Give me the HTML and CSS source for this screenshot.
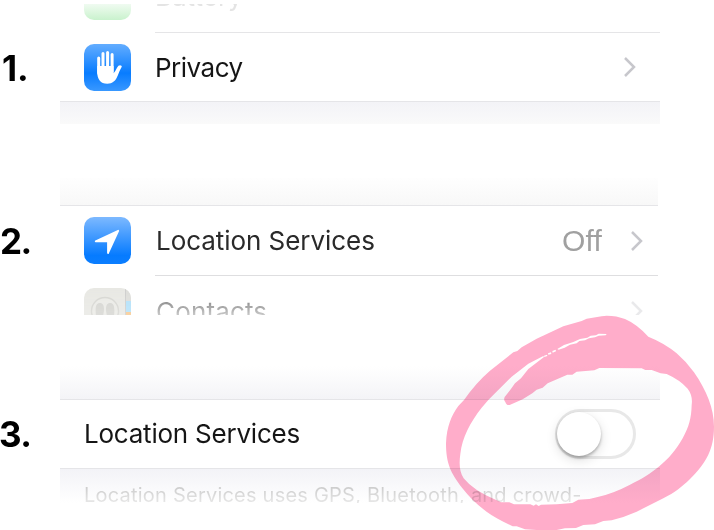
FILE: index.html
```html
<!DOCTYPE html>
<html lang="en">
<head>
<meta charset="utf-8">
<title>Location Services</title>
<link rel="stylesheet" href="styles.css">
</head>
<body>
<main>
  <section class="panel privacy">
    <div class="row battery">
      <span class="battery-icon"></span>
      <span class="label">Battery</span>
    </div>
    <div class="separator"></div>
    <div class="row">
      <b class="step one">1.</b>
      <svg class="app-icon" viewBox="0 0 47 47">
        <defs><linearGradient id="hand-bg" x2="0" y2="1"><stop stop-color="#63adff"/><stop offset=".62" stop-color="#087cff"/><stop offset="1" stop-color="#3998ff"/></linearGradient></defs>
        <rect width="47" height="47" rx="10" fill="url(#hand-bg)"/>
        <g fill="none" stroke="#fff" stroke-width="3" stroke-linecap="round"><path d="M14.7 14v15M19 9.5v16M23.6 8.6v17M28.1 10.5v17"/></g>
        <path fill="#fff" d="M13.2 22H29.6V29.2Q31.3 27.5 33 23.8Q34.5 21 36.6 21.4Q38.6 21.7 37.2 23.8Q35.4 27 34 31C31.7 37 28.5 39.7 23.3 39.7C16.4 39.7 13.2 35.2 13.2 28Z"/>
      </svg>
      <span class="label">Privacy</span>
      <svg class="chevron" viewBox="0 0 14 22"><path d="M2 2l9 9-9 9"/></svg>
    </div>
    <div class="band below"></div>
  </section>

  <section class="panel location">
    <div class="band above"></div>
    <div class="row">
      <b class="step two">2.</b>
      <svg class="app-icon" viewBox="0 0 47 47">
        <defs><linearGradient id="arrow-bg" x2="0" y2="1"><stop stop-color="#7db9ff"/><stop offset=".82" stop-color="#067bff"/><stop offset="1" stop-color="#0b7eff"/></linearGradient></defs>
        <rect width="47" height="47" rx="10" fill="url(#arrow-bg)"/>
        <path d="M34.2 13.8L24 36V24.3H11.7Z" fill="#fff" stroke="#fff" stroke-width="1.8" stroke-linejoin="round"/>
      </svg>
      <span class="label">Location Services</span>
      <span class="value">Off</span>
      <svg class="chevron" viewBox="0 0 14 22"><path d="M2 2l9 9-9 9"/></svg>
    </div>
    <div class="separator"></div>
    <div class="row contacts">
      <svg class="app-icon" viewBox="0 0 47 47">
        <defs><clipPath id="card"><rect width="47" height="47" rx="10"/></clipPath></defs>
        <g clip-path="url(#card)">
          <rect width="47" height="47" fill="#d5d5cd"/>
          <rect x="42" width="5" height="13" fill="#c2c2bb"/>
          <rect x="42" y="13" width="5" height="11" fill="#75c8f4"/>
          <rect x="42" y="24" width="5" height="23" fill="#ef9c35"/>
          <path d="M41.5 0V47" stroke="#999" stroke-width=".8"/>
          <circle cx="21" cy="23" r="13.5" fill="#d9d9d1" stroke="#b5b5ad" stroke-width="1.4"/>
          <path fill="#b3b3ab" d="M12 28C11 19 12 15 16 15S21 20 19 28ZM23 28C21 20 22 15 26 15S31 19 30 28Z"/>
        </g>
      </svg>
      <span class="label">Contacts</span>
      <svg class="chevron" viewBox="0 0 14 22"><path d="M2 2l9 9-9 9"/></svg>
    </div>
  </section>

  <section class="panel toggle">
    <div class="band above"></div>
    <div class="row">
      <b class="step three">3.</b>
      <span class="label">Location Services</span>
      <span class="switch"><i class="knob"></i></span>
    </div>
    <div class="band below"><p>Location Services uses GPS, Bluetooth, and crowd-</p></div>
  </section>

  <svg class="marker" viewBox="0 0 852 690">
    <path fill-rule="evenodd" d="M530 47Q560 47 585 57Q620 72 655 110Q705 130 740 160Q768 184 792 217C830 272 852 325 852 380C852 445 830 488 780 537C755 561 735 577 700 595L620 635L580 651L545 661L520 663L495 673L460 675L438 684L405 685L380 690H320L285 688L260 679H248L220 665C165 638 130 605 96 563C62 519 48 490 48 430C50 379 65 345 85 318L102 300Q137 249 180 212L250 157L262 153L275 142L320 116L400 79L455 63L470 56L515 49Z
      M101 535C88 515 87 490 91 462C97 411 120 368 155 323Q174 300 195 280L245 230L295 191L340 168L342 171L295 207L273 235L255 250L240 271L224 291Q220 300 226 306Q229 317 239 315L278 298L307 280L320 269L338 263L353 250L412 224H427L440 215L493 211L508 204L635 205L646 210H665L692 220L710 222Q750 240 773 266Q789 287 785 315C784 355 777 380 758 415C738 451 716 476 688 499C660 522 635 538 600 554Q551 580 500 592L478 597L445 599L427 609L380 613L333 614L326 618L318 613L311 617L301 613H252L238 607H213L200 601Q130 572 101 535Z
      M342 167l9-3 1 4-9 3ZM354 160l9-3 1 5-9 2ZM367 153l10-4 1 5-10 4ZM382 147L402 135L430 126L450 117L472 113L482 107L498 106L506 101L530 102L527 106L506 107L495 112L477 115L465 121L448 123L440 130L420 134L404 143L386 149Z"/>
  </svg>
</main>
</body>
</html>
```
FILE: styles.css
```css
* { box-sizing: border-box; }
body { margin: 0; background: #fff; font-family: Inter, "Liberation Sans", sans-serif; }
main { position: relative; width: 714px; height: 530px; overflow: hidden; }
.panel { width: 660px; }
.privacy { height: 124px; padding-top: 4px; }
.location { width: 658px; height: 137px; margin-top: 54px; }
.toggle { height: 137px; margin-top: 51px; }
.row { display: flex; align-items: center; height: 68px; padding-left: 84px; padding-right: 23px; color: #151515; }
.row:has(.step) { padding-left: 0; }
.step { flex: 0 0 84px; height: 44px; font-size: 35px; line-height: 44px; font-weight: 700; letter-spacing: -1.6px; color: #000; white-space: nowrap; }
.one { height: 42px; padding-left: 2px; letter-spacing: 0; }
.three { margin-left: -1px; flex-basis: 85px; letter-spacing: -.5px; }
.app-icon { flex: 0 0 47px; height: 47px; }
.label { font-size: 26px; line-height: 34px; white-space: nowrap; letter-spacing: -.22px; }
.privacy .label { padding-top: 2px; letter-spacing: -.5px; }
.app-icon + .label { margin-left: 24px; }
.separator { height: 1px; margin-left: 155px; background: #e5e5e7; }
.chevron { width: 14px; height: 22px; margin-left: auto; fill: none; stroke: #c7c7cc; stroke-width: 2.5; }
.battery { height: 28px; align-items: flex-start; overflow: hidden; }
.battery-icon { width: 47px; height: 16px; border-radius: 0 0 10px 10px; background: linear-gradient(#f0fbf1, #c9f2cd); }
.battery .label { margin: -26px 0 0 24px; color: #e4e4e4; letter-spacing: 0; }
.band { margin-left: 60px; }
.below { height: 23px; border-top: 1px solid #e5e5e8; background: linear-gradient(#f3f3f7, #fafafa); }
.above { height: 28px; border-bottom: 1px solid #e5e5e8; background: linear-gradient(#fefefe, #f8f8f8); }
.location > .row { padding-right: 14px; color: #2a2a2a; }
.location > .row:has(.step) { height: 69px; }
.location .label { letter-spacing: -.05px; }
.location .app-icon + .label { margin-left: 25px; }
.location .separator { background: #dedee0; }
.value { margin-left: auto; font: 30px/34px "Liberation Sans", sans-serif; letter-spacing: .2px; color: #a0a0a0; }
.value + .chevron { margin-left: 28px; }
.location > .contacts { height: 39px; padding-top: 12px; align-items: flex-start; overflow: hidden; }
.contacts .app-icon { opacity: .55; -webkit-mask-image: linear-gradient(#000, #000a); mask-image: linear-gradient(#000, #000a); }
.contacts .label { margin-top: 7px; letter-spacing: .15px; color: transparent; background: linear-gradient(#8e8e8e 6px, #d0d0d0 22px); -webkit-background-clip: text; background-clip: text; }
.contacts .chevron { margin-top: 12px; opacity: .38; }
.toggle .above { height: 34px; background: linear-gradient(#fff, #f4f4f7); }
.toggle .row { padding-right: 24px; }
.toggle .below { height: 35px; padding: 9px 0 0 24px; overflow: hidden; background: linear-gradient(#f3f3f7, #fff); }
.toggle p { margin: 0; font-size: 20px; line-height: 34px; letter-spacing: .22px; white-space: nowrap; color: transparent; background: linear-gradient(#cecece 10px, #ececec 28px); -webkit-background-clip: text; background-clip: text; }
.switch { width: 81px; height: 50px; margin-left: auto; border: 3px solid #e8e8e8; border-radius: 25px; }
.knob { display: block; width: 44px; height: 44px; margin-left: -1px; border-radius: 50%; background: #fff; box-shadow: 0 2px 3px #0004, 0 4px 12px #0002; }
.marker { position: absolute; left: 430px; top: 300px; width: 284px; height: 230px; fill: #ffadca; mix-blend-mode: multiply; }
```
